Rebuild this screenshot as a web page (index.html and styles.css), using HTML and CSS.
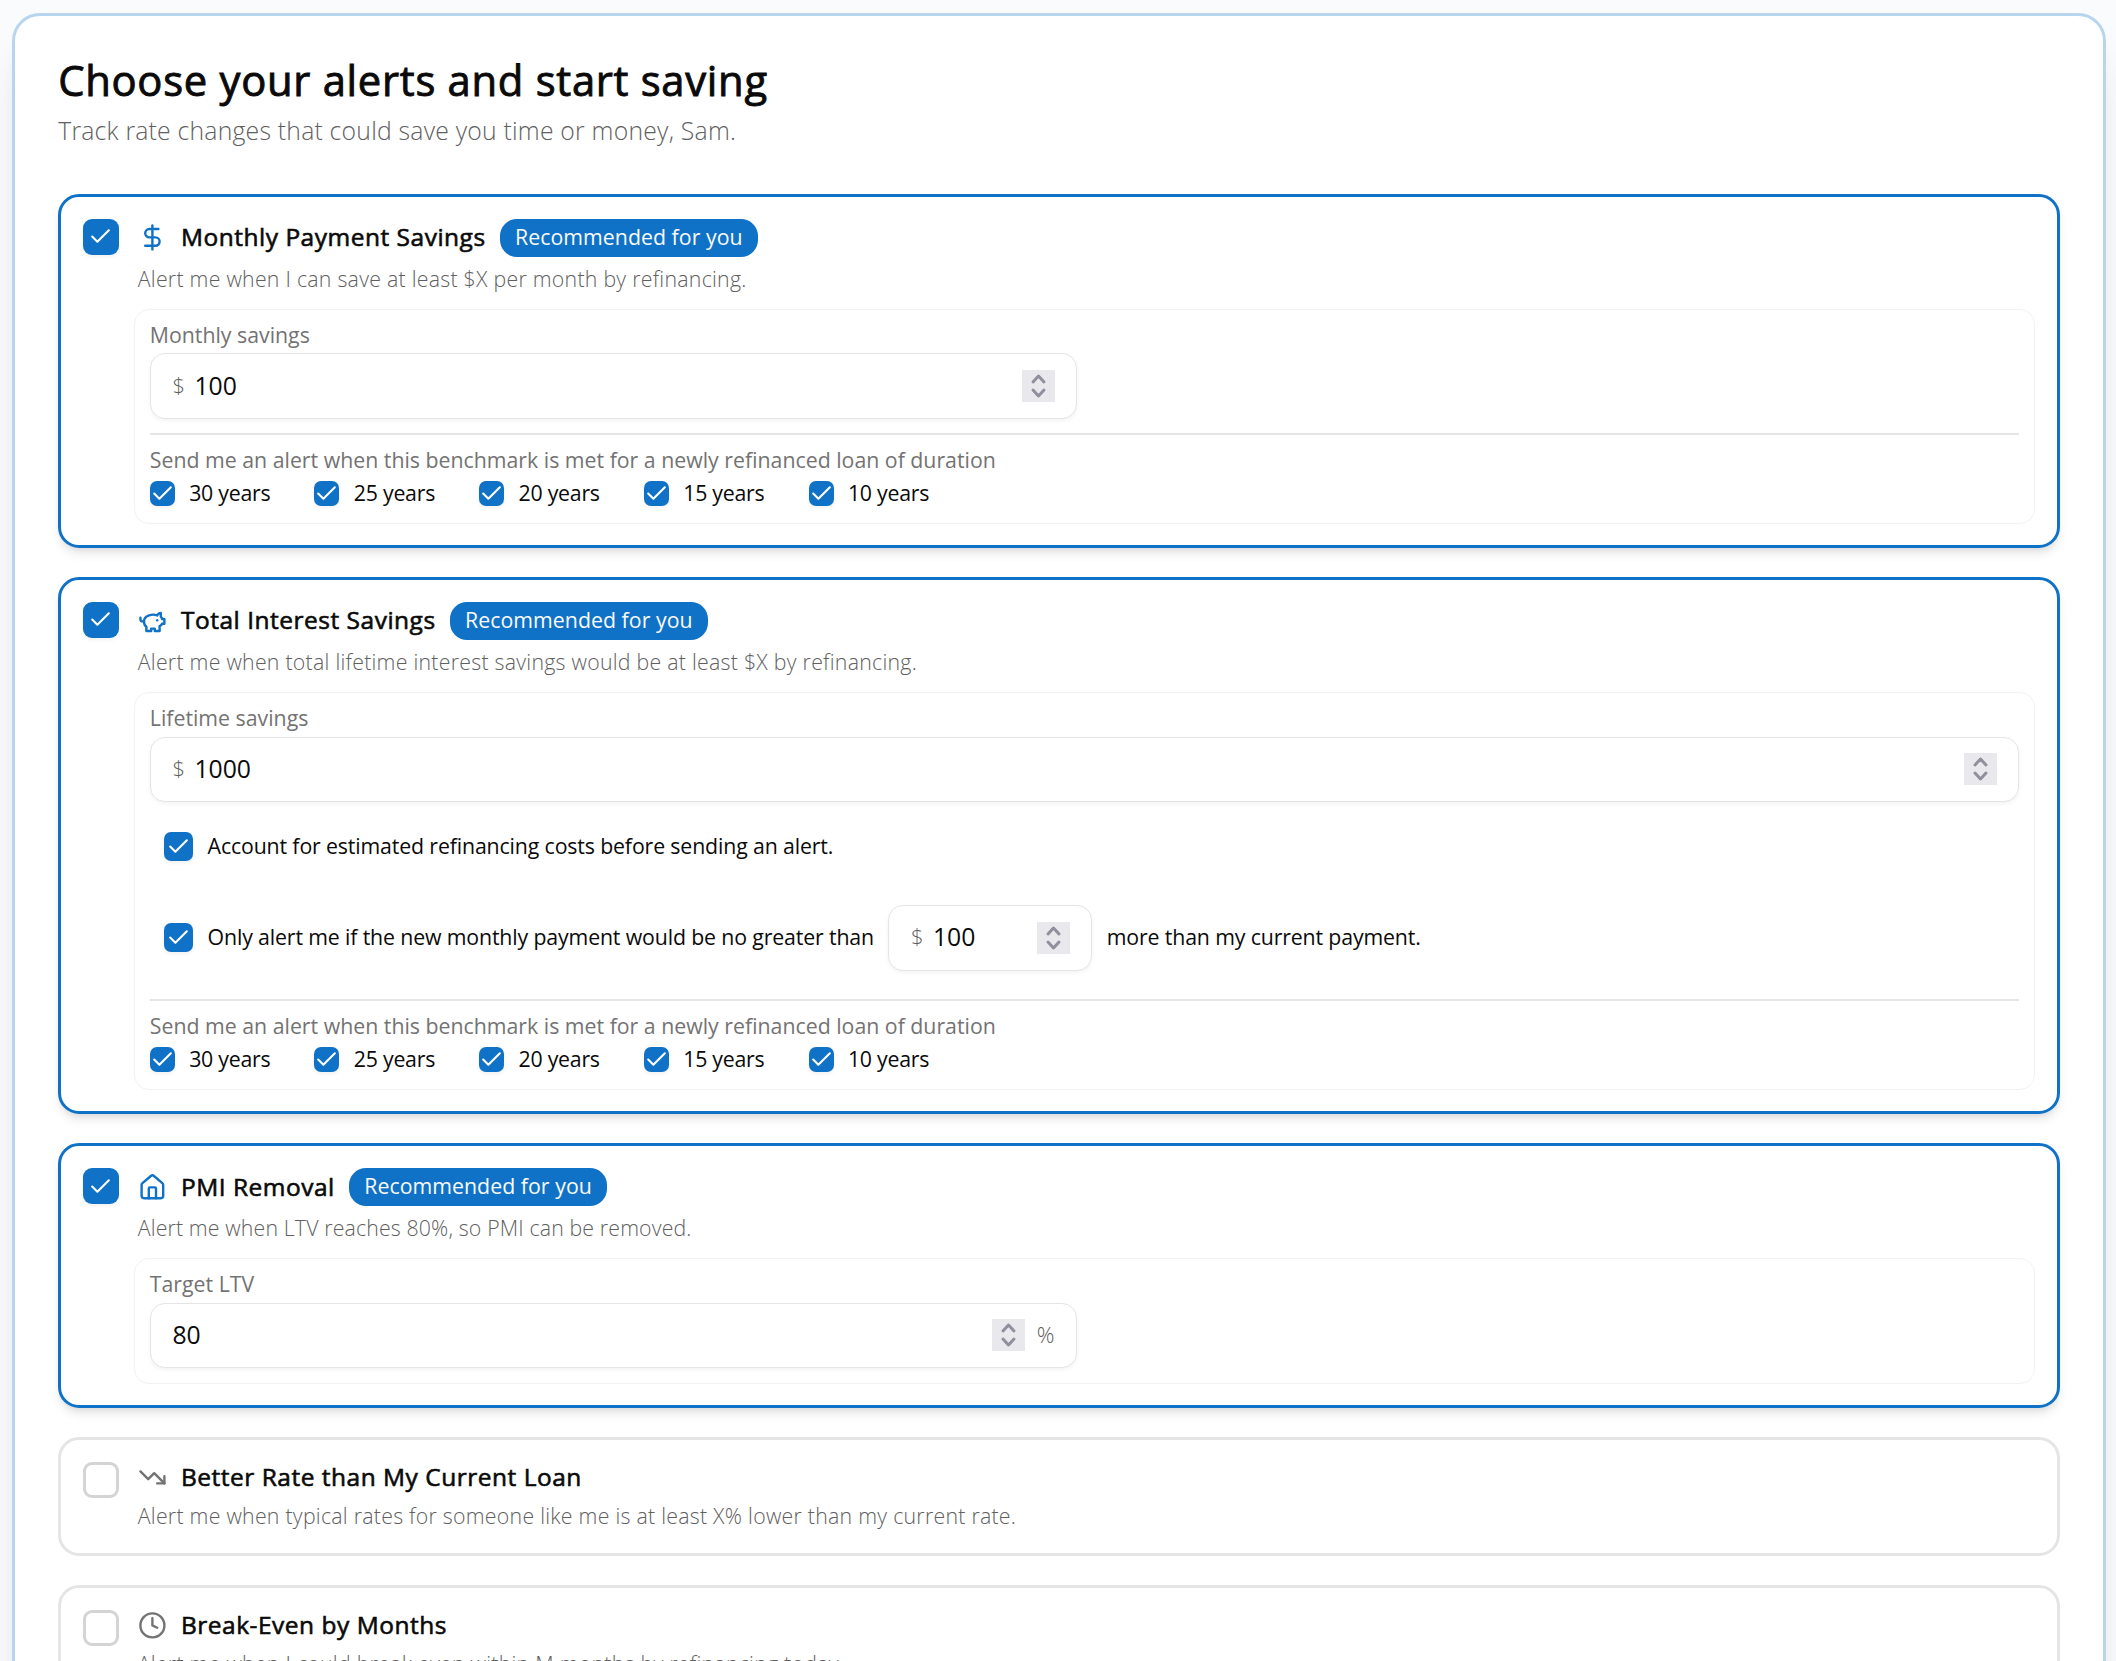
FILE: index.html
```html
<!DOCTYPE html>
<html lang="en">
<head>
    <meta charset="UTF-8">
    <meta name="viewport" content="width=device-width, initial-scale=1.0">
    <title>Choose your alerts</title>
    <link rel="stylesheet" href="styles.css">
</head>
<body>
    <!-- shared icons -->
    <svg class="icon-defs">
        <symbol id="check" viewBox="0 0 24 24"><path d="M20 6 9 17l-5-5"/></symbol>
        <symbol id="spin" viewBox="0 0 33 32"><path d="M11 12l5.5-6 5.5 6M11 20l5.5 6 5.5-6"/></symbol>
    </svg>

    <main class="alerts">
        <h1>Choose your alerts and start saving</h1>
        <p class="subtitle">Track rate changes that could save you time or money, Sam.</p>

        <div class="alert-list">
            <section class="alert selected">
                <span class="checkbox large checked"><svg><use href="#check"/></svg></span>
                <div class="alert-body">
                    <div class="alert-head">
                        <svg class="icon" viewBox="0 0 24 24"><path d="M12 2v20"/><path d="M17 5H9.5a3.5 3.5 0 0 0 0 7h5a3.5 3.5 0 0 1 0 7H6"/></svg>
                        <h2>Monthly Payment Savings</h2>
                        <span class="badge">Recommended for you</span>
                    </div>
                    <p class="description">Alert me when I can save at least $X per month by refinancing.</p>
                    <div class="panel">
                        <div class="field half">
                            <span class="label">Monthly savings</span>
                            <div class="input"><span class="unit">$</span><span class="value">100</span><svg class="spinner"><use href="#spin"/></svg></div>
                        </div>
                        <hr>
                        <div class="field">
                            <span class="label">Send me an alert when this benchmark is met for a newly refinanced loan of duration</span>
                            <div class="durations">
                                <label><span class="checkbox small checked"><svg><use href="#check"/></svg></span>30 years</label>
                                <label><span class="checkbox small checked"><svg><use href="#check"/></svg></span>25 years</label>
                                <label><span class="checkbox small checked"><svg><use href="#check"/></svg></span>20 years</label>
                                <label><span class="checkbox small checked"><svg><use href="#check"/></svg></span>15 years</label>
                                <label><span class="checkbox small checked"><svg><use href="#check"/></svg></span>10 years</label>
                            </div>
                        </div>
                    </div>
                </div>
            </section>

            <section class="alert selected">
                <span class="checkbox large checked"><svg><use href="#check"/></svg></span>
                <div class="alert-body">
                    <div class="alert-head">
                        <svg class="icon" viewBox="0 0 24 24"><path d="M19 5c-1.5 0-2.8 1.4-3 2-3.5-1.5-11-.3-11 5 0 1.8 0 3 2 4.5V20h4v-2h3v2h4v-4c1-.5 1.7-1 2-2h2v-4h-2c0-1-.5-1.5-1-2V5z"/><path d="M2 9v1c0 1.1.9 2 2 2h1"/><path d="M16 11h.01"/></svg>
                        <h2>Total Interest Savings</h2>
                        <span class="badge">Recommended for you</span>
                    </div>
                    <p class="description">Alert me when total lifetime interest savings would be at least $X by refinancing.</p>
                    <div class="panel">
                        <div class="field">
                            <span class="label">Lifetime savings</span>
                            <div class="input"><span class="unit">$</span><span class="value">1000</span><svg class="spinner"><use href="#spin"/></svg></div>
                        </div>
                        <div class="conditions">
                            <label><span class="checkbox checked"><svg><use href="#check"/></svg></span><span class="text">Account for estimated refinancing costs before sending an alert.</span></label>
                            <label><span class="checkbox checked"><svg><use href="#check"/></svg></span><span class="text">Only alert me if the new monthly payment would be no greater than</span>
                                <div class="input narrow"><span class="unit">$</span><span class="value">100</span><svg class="spinner"><use href="#spin"/></svg></div>
                                <span class="text">more than my current payment.</span></label>
                        </div>
                        <hr>
                        <div class="field">
                            <span class="label">Send me an alert when this benchmark is met for a newly refinanced loan of duration</span>
                            <div class="durations">
                                <label><span class="checkbox small checked"><svg><use href="#check"/></svg></span>30 years</label>
                                <label><span class="checkbox small checked"><svg><use href="#check"/></svg></span>25 years</label>
                                <label><span class="checkbox small checked"><svg><use href="#check"/></svg></span>20 years</label>
                                <label><span class="checkbox small checked"><svg><use href="#check"/></svg></span>15 years</label>
                                <label><span class="checkbox small checked"><svg><use href="#check"/></svg></span>10 years</label>
                            </div>
                        </div>
                    </div>
                </div>
            </section>

            <section class="alert selected">
                <span class="checkbox large checked"><svg><use href="#check"/></svg></span>
                <div class="alert-body">
                    <div class="alert-head">
                        <svg class="icon" viewBox="0 0 24 24"><path d="M15 21v-8a1 1 0 0 0-1-1h-4a1 1 0 0 0-1 1v8"/><path d="M3 10a2 2 0 0 1 .709-1.528l7-5.999a2 2 0 0 1 2.582 0l7 5.999A2 2 0 0 1 21 10v9a2 2 0 0 1-2 2H5a2 2 0 0 1-2-2z"/></svg>
                        <h2>PMI Removal</h2>
                        <span class="badge">Recommended for you</span>
                    </div>
                    <p class="description tight">Alert me when LTV reaches 80%, so PMI can be removed.</p>
                    <div class="panel">
                        <div class="field half">
                            <span class="label">Target LTV</span>
                            <div class="input"><span class="value">80</span><svg class="spinner"><use href="#spin"/></svg><span class="unit percent">%</span></div>
                        </div>
                    </div>
                </div>
            </section>

            <section class="alert">
                <span class="checkbox large"></span>
                <div class="alert-body">
                    <div class="alert-head">
                        <svg class="icon" viewBox="0 0 24 24"><path d="M16 17h6v-6"/><path d="m22 17-8.5-8.5-5 5L2 7"/></svg>
                        <h2>Better Rate than My Current Loan</h2>
                    </div>
                    <p class="description">Alert me when typical rates for someone like me is at least X% lower than my current rate.</p>
                </div>
            </section>

            <section class="alert">
                <span class="checkbox large"></span>
                <div class="alert-body">
                    <div class="alert-head">
                        <svg class="icon" viewBox="0 0 24 24"><circle cx="12" cy="12" r="10"/><path d="M12 6v6l4 2"/></svg>
                        <h2>Break-Even by Months</h2>
                    </div>
                    <p class="description">Alert me when I could break even within M months by refinancing today.</p>
                </div>
            </section>
        </div>
    </main>
</body>
</html>
```
FILE: styles.css
```css
* {
    box-sizing: border-box;
}

html {
    font-size: 28.8px;
    overflow: hidden;
}

body {
    margin: 0;
    height: 1661px;
    overflow: hidden;
    padding: 13px 10px 0 12px;
    background-color: #f9fbfd;
    color: #0a0a0a;
    font-family: "Open Sans", "Noto Sans", sans-serif;
}

h1, h2, p {
    margin: 0;
}

svg {
    display: block;
    flex-shrink: 0;
    fill: none;
    stroke: currentColor;
    stroke-width: 2;
    stroke-linecap: round;
    stroke-linejoin: round;
}

.icon-defs {
    display: none;
}

.alerts {
    height: 1750px;
    padding: 1.5rem;
    background-color: #fff;
    border: 3px solid #b7d5ee;
    border-radius: 28px;
    box-shadow: 0 36px 45px -9px rgba(0, 0, 0, 0.1), 0 14px 18px -11px rgba(0, 0, 0, 0.1);
}

h1 {
    font-size: 1.45rem;
    font-weight: 500;
    line-height: 42px;
    letter-spacing: 0.72px;
    -webkit-text-stroke: 0.9px #0a0a0a;
}

.subtitle {
    margin-top: 16px;
    color: #606060;
    font-size: 0.86rem;
    font-weight: 300;
    line-height: 28px;
    letter-spacing: 0.22px;
}

.alert-list {
    display: flex;
    flex-direction: column;
    gap: 29px;
    margin-top: 49px;
}

.alert {
    display: flex;
    align-items: flex-start;
    gap: 15px;
    padding: 0.75rem;
    border: 3px solid #e5e5e5;
    border-radius: 21px;
}

.alert.selected {
    border-color: #1072c6;
    box-shadow: 0 7px 11px -2px rgba(0, 0, 0, 0.1), 0 4px 7px -4px rgba(0, 0, 0, 0.1);
}

.alert-body {
    flex: 1;
    min-height: 70px;
}

.alert-head {
    display: flex;
    align-items: center;
    gap: 0.5rem;
    height: 32px;
    padding-left: 4px;
}

.selected .alert-head {
    height: 38px;
}

h2 {
    padding-bottom: 2px;
    font-size: 0.85rem;
    font-weight: 500;
    line-height: 31px;
    letter-spacing: 0.52px;
    -webkit-text-stroke: 0.6px #0a0a0a;
}

.icon {
    width: 1rem;
    height: 1rem;
    color: #737373;
}

.selected .icon {
    color: #1072c6;
}

.badge {
    height: 38px;
    padding: 0 15px;
    border-radius: 17px;
    background-color: #1072c6;
    color: #fafafa;
    font-size: 0.74rem;
    line-height: 36px;
    letter-spacing: 0.04px;
}

.description {
    margin-top: 7px;
    padding-left: 4px;
    color: #606060;
    font-size: 0.74rem;
    font-weight: 300;
    line-height: 29px;
    letter-spacing: 0.26px;
}

.description.tight {
    letter-spacing: 0.14px;
}

.panel {
    display: flex;
    flex-direction: column;
    gap: 0.5rem;
    margin-top: 16.4px;
    padding: 0.5rem 15px;
    border: 1px solid #f2f2f2;
    border-radius: 15px;
}

.field {
    display: flex;
    flex-direction: column;
    gap: 0.25rem;
}

.half {
    width: calc(50% - 0.25rem);
}

.label {
    height: 0.75rem;
    color: #737373;
    font-size: 0.74rem;
    line-height: 19.6px;
}

.input {
    display: flex;
    align-items: center;
    height: 65.5px;
    padding: 0 21.6px;
    border: 1px solid #e5e5e5;
    border-radius: 15px;
    background-color: #fff;
    box-shadow: 0 2px 4px rgba(0, 0, 0, 0.05);
    letter-spacing: 0;
}

.input.narrow {
    width: 204px;
}

.unit {
    width: 22px;
    padding-bottom: 2px;
    color: #606060;
    font-size: 0.76rem;
    font-weight: 300;
}

.percent {
    width: 18px;
    margin-left: 12px;
}

.value {
    flex: 1;
    padding-bottom: 2px;
    font-size: 0.86rem;
}

.spinner {
    width: 33px;
    height: 32px;
    background-color: #e9e9ed;
    color: #8f8f9d;
    stroke-width: 3;
}

hr {
    width: 100%;
    height: 2px;
    margin: 0;
    border: 0;
    background-color: #e5e5e5;
}

.durations {
    display: grid;
    grid-template-columns: repeat(5, 164.7px);
    height: 30px;
    letter-spacing: -0.25px;
}

label {
    display: flex;
    align-items: center;
    gap: 0.5rem;
    font-size: 0.74rem;
}

.durations label {
    padding-bottom: 2px;
}

.conditions {
    display: flex;
    flex-direction: column;
    gap: 1.5rem;
    padding: 0.5rem;
    letter-spacing: -0.14px;
}

.conditions label {
    min-height: 31px;
}

.text {
    padding-bottom: 2px;
}

.checkbox {
    display: flex;
    align-items: center;
    justify-content: center;
    flex-shrink: 0;
    width: 29px;
    height: 29px;
    border-radius: 7px;
    color: #fff;
}

.checkbox svg {
    width: 25px;
    height: 25px;
}

.checkbox.small {
    width: 25px;
    height: 25px;
    margin-top: 2px;
}

.checkbox.large {
    width: 36px;
    height: 36px;
    border: 3px solid #d4d4d4;
    border-radius: 9px;
}

.checkbox.checked {
    border: none;
    background-color: #1072c6;
    box-shadow: 0 2px 4px rgba(0, 0, 0, 0.06);
}
```
